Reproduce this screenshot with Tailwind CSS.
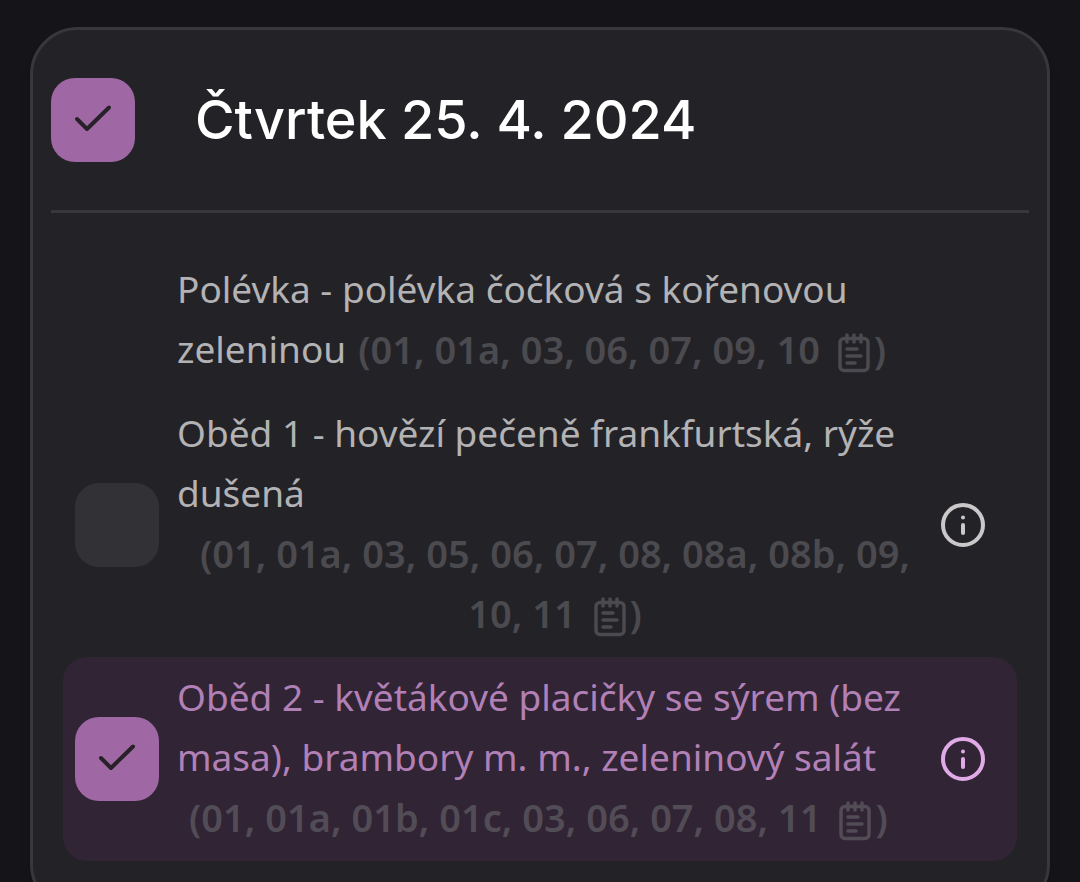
<!DOCTYPE html>
<html lang="cs">
  <head>
    <meta charset="utf-8" />
    <meta content="width=device-width, initial-scale=1.0" name="viewport" />
    <title>Jídelníček</title>
    <script src="https://cdn.jsdelivr.net/npm/@tailwindcss/browser@4"></script>
  </head>
  <body class="bg-[#151419] font-['Noto_Sans',sans-serif] text-[#b3b2b4]">
    <main class="px-[30px] pt-[27px] pb-8">
      <section class="rounded-[48px] border-3 border-[#38373b] bg-[#232227] px-[18px] pb-12 shadow-lg">
        <!-- Day header -->
        <header class="flex items-center gap-15 border-b-3 border-[#38373b] py-12">
          <label class="relative flex size-[84px] shrink-0">
            <input type="checkbox" checked aria-label="Čtvrtek 25. 4. 2024" class="peer size-full appearance-none rounded-3xl bg-[#323135] checked:bg-[#9f68a5]" />
            <svg class="pointer-events-none absolute inset-0 hidden size-full peer-checked:block" viewBox="0 0 84 84" fill="none" stroke="#282129" stroke-width="4" stroke-linecap="round" stroke-linejoin="round">
              <path d="M26 41 36 51 58 29.500" />
            </svg>
          </label>
          <h1 class="font-['Inter',sans-serif] text-[54px] leading-[84px] font-medium text-white">Čtvrtek 25. 4. 2024</h1>
        </header>

        <!-- Meals -->
        <ul class="px-3 pt-9 text-[37px] leading-[60px]">
          <li class="flex items-center px-3 py-3">
            <div class="mr-[18px] w-[84px] shrink-0"></div>
            <div class="-mt-[2px] mb-[2px] flex-1">
              <span>Polévka - polévka čočková s kořenovou zeleninou</span><button type="button" class="inline-block pl-3 text-center align-top text-[38px] font-semibold text-[#4b4a4f]">(01, 01a, 03, 06, 07, 09, 10 <svg class="mr-1 ml-2 inline h-10 w-8 align-[-9px]" viewBox="0 0 32 40" fill="none" stroke="currentColor" stroke-width="3.500" stroke-linecap="round"><rect x="2" y="5.500" width="28" height="32" rx="4" /><path d="M9 2v7M16 2v7M23 2v7" /><path d="M9 16h10M9 23h14M9 30h8" /></svg>)</button>
            </div>
            <div class="w-[84px] shrink-0"></div>
          </li>

          <li class="flex items-center px-3 py-3">
            <label class="relative mr-[18px] flex size-[84px] shrink-0">
              <input type="checkbox" aria-label="Oběd 1" class="peer size-full appearance-none rounded-3xl bg-[#323135] checked:bg-[#9f68a5]" />
              <svg class="pointer-events-none absolute inset-0 hidden size-full peer-checked:block" viewBox="0 0 84 84" fill="none" stroke="#282129" stroke-width="4" stroke-linecap="round" stroke-linejoin="round">
                <path d="M26 41 36 51 58 29.500" />
              </svg>
            </label>
            <div class="-mt-[2px] mb-[2px] flex-1">
              <span>Oběd 1 - hovězí pečeně frankfurtská, rýže dušená</span>
              <button type="button" class="inline-block pl-3 text-center align-top text-[38px] font-semibold text-[#4b4a4f]">(01, 01a, 03, 05, 06, 07, 08, 08a, 08b, 09, 10, 11 <svg class="mr-1 ml-2 inline h-10 w-8 align-[-9px]" viewBox="0 0 32 40" fill="none" stroke="currentColor" stroke-width="3.500" stroke-linecap="round"><rect x="2" y="5.500" width="28" height="32" rx="4" /><path d="M9 2v7M16 2v7M23 2v7" /><path d="M9 16h10M9 23h14M9 30h8" /></svg>)</button>
            </div>
            <button type="button" aria-label="Informace" class="flex size-[84px] shrink-0 items-center justify-center text-[#cbc8ca]">
              <svg class="size-11" viewBox="0 0 44 44" fill="none" stroke="currentColor" stroke-width="4" stroke-linecap="round">
                <circle cx="22" cy="22" r="20" />
                <path d="M22 22v8M22 14.500v.1" />
              </svg>
            </button>
          </li>

          <li class="flex items-center rounded-3xl bg-[#312434] px-3 py-3 text-[#b180b6]">
            <label class="relative mr-[18px] flex size-[84px] shrink-0">
              <input type="checkbox" checked aria-label="Oběd 2" class="peer size-full appearance-none rounded-3xl bg-[#323135] checked:bg-[#9f68a5]" />
              <svg class="pointer-events-none absolute inset-0 hidden size-full peer-checked:block" viewBox="0 0 84 84" fill="none" stroke="#282129" stroke-width="4" stroke-linecap="round" stroke-linejoin="round">
                <path d="M26 41 36 51 58 29.500" />
              </svg>
            </label>
            <div class="-mt-[2px] mb-[2px] flex-1">
              <span>Oběd 2 - květákové placičky se sýrem (bez masa), brambory m. m., zeleninový salát</span>
              <button type="button" class="inline-block pl-3 text-center align-top text-[38px] font-semibold text-[#524c56]">(01, 01a, 01b, 01c, 03, 06, 07, 08, 11 <svg class="mr-1 ml-2 inline h-10 w-8 align-[-9px]" viewBox="0 0 32 40" fill="none" stroke="currentColor" stroke-width="3.500" stroke-linecap="round"><rect x="2" y="5.500" width="28" height="32" rx="4" /><path d="M9 2v7M16 2v7M23 2v7" /><path d="M9 16h10M9 23h14M9 30h8" /></svg>)</button>
            </div>
            <button type="button" aria-label="Informace" class="flex size-[84px] shrink-0 items-center justify-center text-[#dfaae6]">
              <svg class="size-11" viewBox="0 0 44 44" fill="none" stroke="currentColor" stroke-width="4" stroke-linecap="round">
                <circle cx="22" cy="22" r="20" />
                <path d="M22 22v8M22 14.500v.1" />
              </svg>
            </button>
          </li>
        </ul>
      </section>
    </main>
  </body>
</html>
